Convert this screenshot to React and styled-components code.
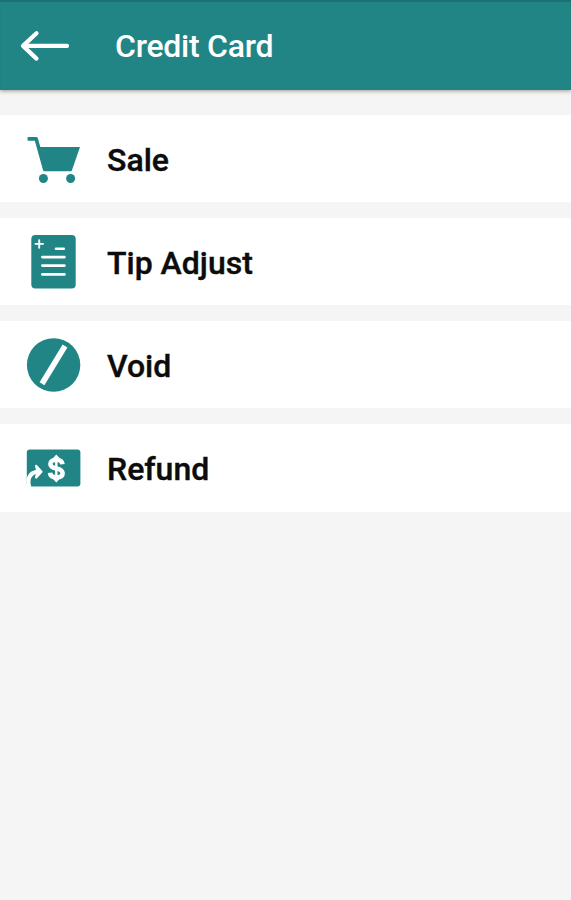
import React from "react"
import styled, { createGlobalStyle } from "styled-components"

const TEAL = "#218586"

const CartIcon = () => (
  <Icon viewBox='0 0 56 56'>
    <path
      d='M1.6 7.9 H10.2 L18.9 39'
      fill='none'
      stroke={TEAL}
      strokeWidth='3.6'
      strokeLinejoin='round'
    />
    <path d='M12 16 H54 L45.6 40.3 H17.6 Z' fill={TEAL} />
    <circle cx='17.4' cy='47.5' r='4.5' fill={TEAL} />
    <circle cx='44.6' cy='47.5' r='4.5' fill={TEAL} />
  </Icon>
)

const TipIcon = () => (
  <Icon viewBox='0 0 56 56'>
    <rect x='5.3' y='1' width='44.4' height='53.6' rx='4' fill={TEAL} />
    <g stroke='#fff' strokeLinecap='round'>
      <path d='M9.5 9.9 H17 M13.2 6.2 V13.8' strokeWidth='1.9' />
      <path d='M30 14.7 H37.8' strokeWidth='2.6' />
      <path d='M16.4 23.1 H38.4 M16.4 31.6 H38.4 M16.4 40.4 H38.4' strokeWidth='2.8' />
    </g>
  </Icon>
)

const VoidIcon = () => (
  <Icon viewBox='0 0 56 56'>
    <circle cx='27.6' cy='28' r='26.7' fill={TEAL} />
    <path d='M16 46.8 L39 9' stroke='#fff' strokeWidth='5.6' />
  </Icon>
)

const RefundIcon = () => (
  <Icon viewBox='0 0 56 56'>
    <rect x='0.8' y='9.5' width='53.6' height='37' rx='3' fill={TEAL} />
    <path
      d='M0.6 40 C1.2 34.5 5 30 12 29.8 V33.8 C6.5 34 2.6 39 5.4 46.8 H0.6 Z'
      fill='#fff'
    />
    <path
      d='M10.2 26 L15.4 31.7 L10.2 37.4 L11.6 31.7 Z'
      fill='#fff'
      stroke='#fff'
      strokeWidth='2.4'
      strokeLinejoin='round'
    />
    <path
      d='M36.5 24.2 C36.1 21 33.7 19.7 30.4 19.7 C26.8 19.7 24.4 21.3 24.4 23.9 C24.4 26.8 27 27.7 30.4 28.4 C34 29.2 36.6 30.3 36.6 33.2 C36.6 36.1 33.9 37.4 30.4 37.4 C26.7 37.4 24.3 35.8 24 32.8'
      fill='none'
      stroke='#fff'
      strokeWidth='4.6'
    />
    <path d='M30.3 14.4 L34.4 19 H26.2 Z M30.3 42.4 L34.4 38 H26.2 Z' fill='#fff' />
    <path d='M30.3 16 V41' stroke='#fff' strokeWidth='2.4' />
  </Icon>
)

const items = [
  { label: "Sale", icon: CartIcon },
  { label: "Tip Adjust", icon: TipIcon },
  { label: "Void", icon: VoidIcon },
  { label: "Refund", icon: RefundIcon },
]

const App = () => {
  return (
    <Screen>
      <GlobalStyle />
      <TopBar>
        <BackButton aria-label='Back'>
          <svg width='50' height='32' viewBox='0 0 50 32'>
            <path
              d='M16.5 3.2 L3 15.9 L16.5 28.6 M3.5 15.9 H47'
              fill='none'
              stroke='#fff'
              strokeWidth='4.2'
              strokeLinecap='round'
              strokeLinejoin='round'
            />
          </svg>
        </BackButton>
        <Title>Credit Card</Title>
      </TopBar>
      <Menu>
        {items.map(({ label, icon: ItemIcon }) => (
          <MenuItem key={label}>
            <ItemIcon />
            <Label>{label}</Label>
          </MenuItem>
        ))}
      </Menu>
    </Screen>
  )
}

export default App

const GlobalStyle = createGlobalStyle`
  * {
    box-sizing: border-box;
  }

  body {
    margin: 0;
    background: #f5f5f5;
    font-family: Roboto, sans-serif;
  }
`

const Screen = styled.div`
  min-height: 100vh;
  background: #f5f5f5;
`

const TopBar = styled.header`
  display: flex;
  align-items: center;
  height: 90px;
  padding: 2px 20px 0;
  background: ${TEAL};
  box-shadow: inset 0 2px 1px #1d7073, 0 1px 4px rgba(60, 30, 30, 0.45);
`

const BackButton = styled.button`
  display: flex;
  padding: 0;
  border: 0;
  background: none;
`

const Title = styled.h1`
  margin: 0 0 0 45px;
  color: #fff;
  font-size: 32px;
  font-weight: 500;
  line-height: 40px;
  letter-spacing: -0.25px;
`

const Menu = styled.ul`
  display: flex;
  flex-direction: column;
  gap: 16px;
  margin: 25px 0 0;
  padding: 0;
  list-style: none;
`

const MenuItem = styled.li`
  display: flex;
  align-items: flex-start;
  height: 87px;
  padding: 16px 0 0 26px;
  background: #fff;

  &:last-child {
    height: 88px;
  }
`

const Icon = styled.svg`
  width: 56px;
  height: 56px;
  flex: none;
`

const Label = styled.span`
  margin: 9px 0 0 25px;
  color: #0c0c0c;
  font-size: 32px;
  font-weight: 500;
  line-height: 40px;
  -webkit-text-stroke: 0.4px #0c0c0c;
`
